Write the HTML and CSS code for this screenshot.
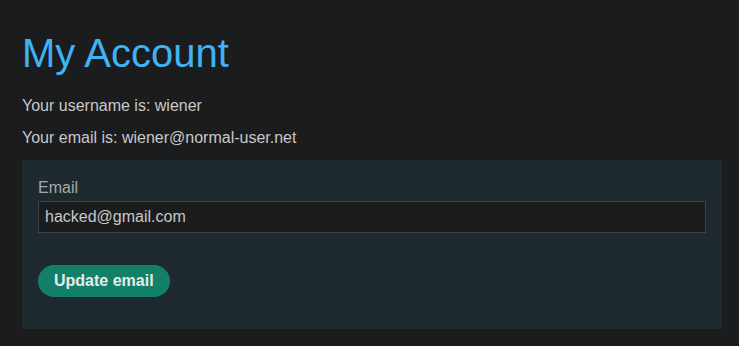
FILE: index.html
```html
<!DOCTYPE html>
<html>
<head>
<meta charset="utf-8">
<link rel="stylesheet" href="styles.css">
</head>
<body>
<div class="page">
  <h1 class="title">My Account</h1>
  <p class="info">Your username is: wiener</p>
  <p class="info info-second">Your email is: wiener@normal-user.net</p>
  <form class="panel">
    <label class="label" for="email">Email</label>
    <input class="input" id="email" type="text" value="hacked@gmail.com">
    <button class="button" type="button">Update email</button>
  </form>
</div>
</body>
</html>
```
FILE: styles.css
```css
html, body {
  margin: 0;
  padding: 0;
  background: #1b1c1e;
}
body {
  font-family: "Liberation Sans", Arial, sans-serif;
  color: #c8c8c8;
}
.page {
  padding: 30px 17px 0 22px;
}
.title {
  margin: 0;
  font-size: 40px;
  line-height: 46px;
  font-weight: 400;
  color: #3fb3f5;
}
.info {
  margin: 18px 0 0;
  font-size: 16px;
  line-height: 24px;
}
.info-second {
  margin-top: 8px;
}
.panel {
  margin-top: 10px;
  background: #1e2a30;
  padding: 16px 16px 32px;
  display: flex;
  flex-direction: column;
  align-items: flex-start;
}
.label {
  font-size: 16px;
  line-height: 24px;
  color: #a8a8a8;
}
.input {
  margin-top: 1px;
  box-sizing: border-box;
  width: 100%;
  height: 32px;
  background: #1b1c1e;
  border: 1px solid #3c4548;
  color: #c8c8c8;
  font-family: "Liberation Sans", Arial, sans-serif;
  font-size: 16px;
  padding: 0 6px;
  outline: none;
}
.button {
  margin-top: 32px;
  height: 32px;
  padding: 0 16px;
  border: none;
  border-radius: 16px;
  background: #127f69;
  color: #e8ece9;
  font-family: "Liberation Sans", Arial, sans-serif;
  font-size: 16px;
  font-weight: 700;
  cursor: pointer;
}
```
